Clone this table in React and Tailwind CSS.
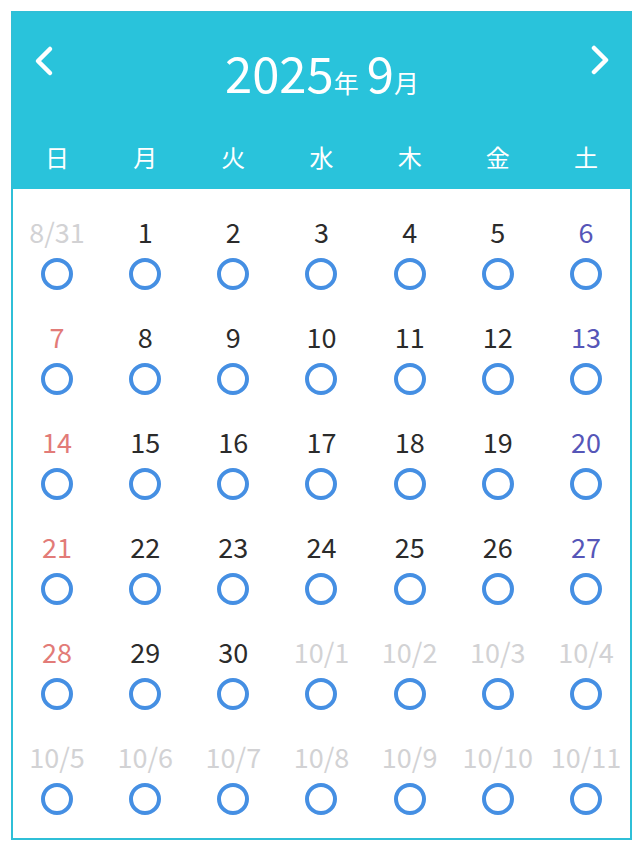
import React from "react";

const weekdays = ["日", "月", "火", "水", "木", "金", "土"];

function buildDays() {
  const cells = [];
  cells.push({ label: "8/31", muted: true });
  for (let d = 1; d <= 30; d++) cells.push({ label: String(d) });
  for (let d = 1; d <= 11; d++) cells.push({ label: `10/${d}`, muted: true });
  return cells;
}

function colorFor(cell, col) {
  if (cell.muted) return "text-[#d2d2d4]";
  if (col === 0) return "text-[#e27b78]";
  if (col === 6) return "text-[#5656b8]";
  return "text-[#2b2b2b]";
}

export default function App() {
  const cells = buildDays();
  const rows = [];
  for (let i = 0; i < 6; i++) rows.push(cells.slice(i * 7, i * 7 + 7));
  return (
    <div
      className="bg-white w-[644px] h-[852px] pt-[11px] pl-[11px]"
      style={{ fontFamily: '"Noto Sans CJK JP", "Noto Sans", sans-serif' }}
    >
      <div className="w-[621px] h-[829px] border-2 border-[#2fbfd7] flex flex-col">
        <div className="bg-[#29c3db] h-[176px] flex flex-col text-white">
          <div className="flex items-start pl-[21px] pr-[20px] pt-[32px] h-[120px]">
            <svg width="20" height="32" viewBox="0 0 20 32" className="shrink-0">
              <path d="M16 4 L4 16 L16 28" fill="none" stroke="white" strokeWidth="4.5" strokeLinecap="round" strokeLinejoin="round" />
            </svg>
            <div className="flex-1 flex justify-center items-baseline mt-[2px]">
              <span className="text-[49px] leading-none">2025</span>
              <span className="text-[25px] leading-none mr-[8px]">年</span>
              <span className="text-[49px] leading-none">9</span>
              <span className="text-[25px] leading-none">月</span>
            </div>
            <svg width="20" height="32" viewBox="0 0 20 32" className="shrink-0">
              <path d="M4 3 L16 15 L4 27" fill="none" stroke="white" strokeWidth="4.5" strokeLinecap="round" strokeLinejoin="round" />
            </svg>
          </div>
          <div className="grid grid-cols-7 h-[48px] items-center">
            {weekdays.map((w) => (
              <div key={w} className="text-center text-[24px] leading-none">
                {w}
              </div>
            ))}
          </div>
        </div>
        <div className="flex flex-col gap-[30px] pt-[26px]">
          {rows.map((row, ri) => (
            <div key={ri} className="grid grid-cols-7">
              {row.map((cell, ci) => (
                <div key={ci} className="flex flex-col items-center gap-[11px]">
                  <div className={`h-[32px] flex items-center text-[27px] leading-none whitespace-nowrap ${colorFor(cell, ci)}`}>
                    {cell.label}
                  </div>
                  <div className="w-[32px] h-[32px] rounded-full border-4 border-[#458fe3]" />
                </div>
              ))}
            </div>
          ))}
        </div>
      </div>
    </div>
  );
}
